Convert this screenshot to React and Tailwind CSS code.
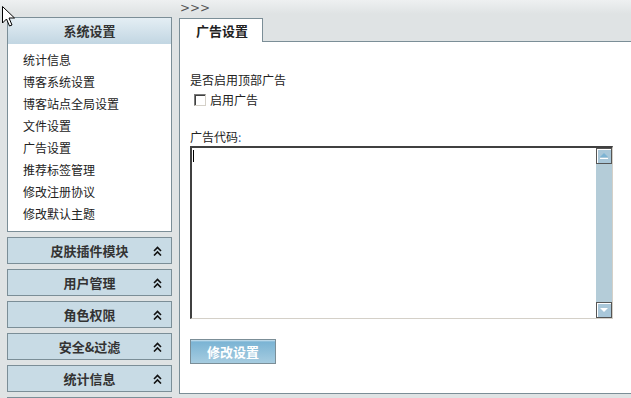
import React from "react";

const cn = "font-['SimSun','Noto_Sans_CJK_SC',sans-serif]";

function Chevron() {
  return (
    <svg width="9" height="10" viewBox="0 0 9 10" className="absolute right-[9px] top-[8px]">
      <path d="M1 5 L4.5 1.5 L8 5" fill="none" stroke="#111" strokeWidth="1.6" />
      <path d="M1 9.5 L4.5 6 L8 9.5" fill="none" stroke="#111" strokeWidth="1.6" />
    </svg>
  );
}

function Collapsed({ title }) {
  return (
    <div className="relative shrink-0 h-[27px] border border-[#7b8e97] bg-[#c8dbe5] flex items-center justify-center">
      <span className="text-[13px] font-bold text-[#333] leading-none">{title}</span>
      <Chevron />
    </div>
  );
}

export default function App() {
  const items = ["统计信息", "博客系统设置", "博客站点全局设置", "文件设置", "广告设置", "推荐标签管理", "修改注册协议", "修改默认主题"];
  return (
    <div className={`relative w-[631px] h-[398px] overflow-hidden bg-[linear-gradient(#eef0f1_0px,#dfe3e4_14px,#dfe3e4_100%)] ${cn} text-[12px] text-[#222]`}>
      <div className="flex h-full">
        {/* sidebar */}
        <div className="w-[165px] ml-[7px] pt-[17px] flex flex-col gap-[5px] shrink-0">
          <div className="shrink-0 border border-[#7b8e97] bg-white">
            <div className="h-[26px] bg-[linear-gradient(#e4eef4,#c3d7e3)] flex items-center justify-center border-b border-[#c3d7e3]">
              <span className="text-[13px] font-bold text-[#333] leading-none">系统设置</span>
            </div>
            <ul className="pl-[15px] pt-[5px] pb-[6px]">
              {items.map((t) => (
                <li key={t} className="h-[22px] leading-[22px]">{t}</li>
              ))}
            </ul>
          </div>
          <Collapsed title="皮肤插件模块" />
          <Collapsed title="用户管理" />
          <Collapsed title="角色权限" />
          <Collapsed title="安全&过滤" />
          <Collapsed title="统计信息" />
          <div className="shrink-0 h-[27px] border border-[#7b8e97] bg-[#c8dbe5]" />
        </div>

        {/* main */}
        <div className="ml-[7px] flex-1 flex flex-col pb-[4px]">
          <div className="h-[18px] text-[12px] leading-[16px] text-[#555] pl-[1px] font-['DejaVu_Sans',sans-serif]">&gt;&gt;&gt;</div>
          <div className="flex items-end h-[24px] shrink-0">
            <div className="w-[84px] h-[24px] border border-b-0 border-[#7b8e97] bg-white pl-[16px] flex items-center">
              <span className="text-[13px] font-bold text-[#222] leading-none">广告设置</span>
            </div>
            <div className="flex-1 border-b border-[#7b8e97] h-full" />
          </div>
          <div className="flex-1 border-l border-b border-[#7b8e97] bg-white pl-[10px] pt-[31px]">
            <div className="leading-[14px]">是否启用顶部广告</div>
            <div className="flex items-center mt-[6px] ml-[4px] h-[14px]">
              <div className="w-[12px] h-[12px] border border-[#7a7a7a] border-r-[#d4d0c8] border-b-[#d4d0c8] bg-white shadow-[inset_1px_1px_0_#404040]" />
              <span className="ml-[4px] leading-[14px]">启用广告</span>
            </div>
            <div className="mt-[23px] leading-[14px]">广告代码<span className="text-[#3366aa]">:</span></div>
            <div className="mt-[2px] w-[423px] h-[173px] border-t-2 border-l-2 border-t-[#404040] border-l-[#404040] border-b border-r border-b-[#d4d0c8] border-r-[#d4d0c8] bg-white flex">
              <div className="flex-1 relative">
                <div className="absolute left-[1px] top-[2px] w-[1px] h-[12px] bg-black" />
              </div>
              <div className="w-[16px] bg-[#b4ccd8] flex flex-col justify-between">
                <div className="h-[16px] border border-[#555] bg-[#a9c7d9] shadow-[inset_1px_1px_0_#fff] flex flex-col items-center justify-center gap-[1px]">
                  <div className="w-0 h-0 border-l-[4px] border-r-[4px] border-b-[4px] border-l-transparent border-r-transparent border-b-[#7db3d3]" />
                  <div className="w-[8px] h-[1px] bg-white" />
                </div>
                <div className="h-[16px] border border-[#555] bg-[#a9c7d9] shadow-[inset_1px_1px_0_#fff] flex items-center justify-center">
                  <div className="w-0 h-0 border-l-[4px] border-r-[4px] border-t-[4px] border-l-transparent border-r-transparent border-t-[#fff]" />
                </div>
              </div>
            </div>
            <div className="mt-[20px] w-[86px] h-[25px] border border-[#7b8e97] bg-[linear-gradient(#cfe4f0_0px,#7bb4d4_2px,#a6cce0_100%)] flex items-center justify-center">
              <span className="text-[13px] font-bold text-white leading-none">修改设置</span>
            </div>
          </div>
        </div>
      </div>

      {/* mouse cursor */}
      <svg className="absolute left-[2px] top-[6px]" width="14" height="22" viewBox="0 0 14 22">
        <path d="M0.5 0.5 L0.5 17 L4.5 13 L7.5 20 L10 19 L7 12 L12.5 12 Z" fill="#fff" stroke="#000" strokeWidth="1" />
      </svg>
    </div>
  );
}
